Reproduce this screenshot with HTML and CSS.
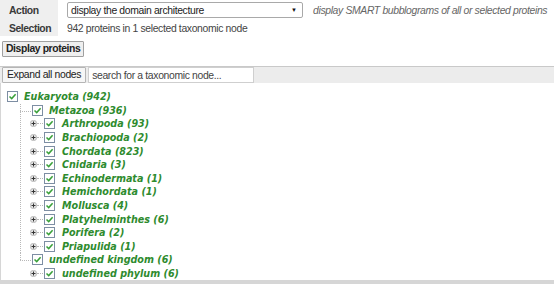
FILE: index.html
```html
<!DOCTYPE html>
<html>
<head>
<meta charset="utf-8">
<link rel="stylesheet" href="styles.css">
</head>
<body>
<div class="form">
  <div class="label">Action</div>
  <div class="value">
    <div class="select"><span>display the domain architecture</span><span class="arrow">&#9660;</span></div>
    <span class="hint">display SMART bubblograms of all or selected proteins</span>
  </div>
  <div class="label">Selection</div>
  <div class="value">942 proteins in 1 selected taxonomic node</div>
</div>
<div class="actions"><button class="btn">Display proteins</button></div>
<div class="toolbar">
  <button class="btn light">Expand all nodes</button>
  <input class="search" type="text" placeholder="search for a taxonomic node...">
</div>
<div class="treebox">
  <ul class="tree">
    <li>
      <div class="node"><span class="cb"></span><span class="name">Eukaryota (942)</span></div>
      <ul class="branch">
        <li>
          <div class="node"><span class="cb"></span><span class="name">Metazoa (936)</span></div>
          <ul class="leaves">
            <li><div class="node"><span class="exp"></span><span class="dash"></span><span class="cb"></span><span class="name">Arthropoda (93)</span></div></li>
            <li><div class="node"><span class="exp"></span><span class="dash"></span><span class="cb"></span><span class="name">Brachiopoda (2)</span></div></li>
            <li><div class="node"><span class="exp"></span><span class="dash"></span><span class="cb"></span><span class="name">Chordata (823)</span></div></li>
            <li><div class="node"><span class="exp"></span><span class="dash"></span><span class="cb"></span><span class="name">Cnidaria (3)</span></div></li>
            <li><div class="node"><span class="exp"></span><span class="dash"></span><span class="cb"></span><span class="name">Echinodermata (1)</span></div></li>
            <li><div class="node"><span class="exp"></span><span class="dash"></span><span class="cb"></span><span class="name">Hemichordata (1)</span></div></li>
            <li><div class="node"><span class="exp"></span><span class="dash"></span><span class="cb"></span><span class="name">Mollusca (4)</span></div></li>
            <li><div class="node"><span class="exp"></span><span class="dash"></span><span class="cb"></span><span class="name">Platyhelminthes (6)</span></div></li>
            <li><div class="node"><span class="exp"></span><span class="dash"></span><span class="cb"></span><span class="name">Porifera (2)</span></div></li>
            <li><div class="node"><span class="exp"></span><span class="dash"></span><span class="cb"></span><span class="name">Priapulida (1)</span></div></li>
          </ul>
        </li>
        <li>
          <div class="node"><span class="cb"></span><span class="name">undefined kingdom (6)</span></div>
          <ul class="leaves">
            <li><div class="node"><span class="exp"></span><span class="dash"></span><span class="cb"></span><span class="name">undefined phylum (6)</span></div></li>
          </ul>
        </li>
      </ul>
    </li>
  </ul>
</div>
<div class="bottombar"></div>
</body>
</html>
```

FILE: styles.css
```css
html, body { margin: 0; padding: 0; background: #fff; }
body {
  width: 554px;
  height: 284px;
  overflow: hidden;
  font-family: "Liberation Sans", Arial, sans-serif;
  font-size: 10.4px;
  letter-spacing: -0.35px;
  color: #333;
  display: flex;
  flex-direction: column;
}
.form {
  display: grid;
  grid-template-columns: 58px 1fr;
  grid-template-rows: 20px 16px;
}
.label {
  background: #efefef;
  font-weight: bold;
  font-size: 10.4px;
  letter-spacing: -0.45px;
  color: #3a3a3a;
  padding-left: 9px;
  display: flex;
  align-items: center;
}
.value {
  display: flex;
  align-items: center;
  padding-left: 9px;
  color: #444;
  white-space: nowrap;
}
.select {
  width: 236px;
  height: 16px;
  box-sizing: border-box;
  border: 1px solid #a9a9a9;
  border-radius: 2px;
  background: #fff;
  display: flex;
  align-items: center;
  justify-content: space-between;
  padding: 0 5px 0 3px;
  color: #222;
  flex: none;
}
.arrow { font-size: 6px; color: #111; letter-spacing: 0; }
.hint {
  margin-left: 10px;
  font-style: italic;
  color: #666;
}
.actions { padding: 5px 0 9px 2px; }
.btn {
  font-family: "Liberation Sans", Arial, sans-serif;
  font-size: 10.4px;
  letter-spacing: -0.4px;
  font-weight: bold;
  color: #222;
  background: #efefef;
  border: 1px solid #a0a0a0;
  border-radius: 1px;
  height: 16px;
  padding: 0 3px;
  margin: 0;
  line-height: 14px;
}
.toolbar {
  border-top: 1px solid #c9c9c9;
  background: #ececec;
  height: 18px;
  display: flex;
  align-items: center;
  padding-left: 2px;
  gap: 2px;
}
.btn.light {
  font-weight: normal;
  letter-spacing: -0.35px;
  background: #f6f6f6;
  border-color: #b5b5b5;
  padding: 0 4px;
}
.search {
  width: 166px;
  height: 16px;
  box-sizing: border-box;
  border: 1px solid #cfcfcf;
  font-family: "Liberation Sans", Arial, sans-serif;
  font-size: 10.4px;
  letter-spacing: -0.35px;
  padding: 0 3px;
  margin: 0;
}
.search::placeholder { color: #444; }
.treebox {
  flex: 1;
  border-left: 1px solid #d6d6d6;
}
ul { list-style: none; margin: 0; padding: 0; }
.tree { padding: 7px 0 0 6px; }
.node {
  display: flex;
  align-items: center;
  height: 13.6px;
}
.cb {
  width: 11px;
  height: 11px;
  box-sizing: border-box;
  border: 1px solid #7d8ea3;
  background: #fff url("data:image/svg+xml;utf8,<svg xmlns='http://www.w3.org/2000/svg' width='9' height='9'><path d='M1.5 4.5 L3.7 6.6 L7.6 2.2' fill='none' stroke='%2339a039' stroke-width='1.5'/></svg>") center / 9px 9px no-repeat;
  flex: none;
}
.name {
  margin-left: 6px;
  font-family: "DejaVu Sans", Verdana, sans-serif;
  font-size: 9.6px;
  letter-spacing: 0;
  font-weight: bold;
  font-style: italic;
  color: #2e8b2e;
  white-space: nowrap;
}
.leaves .name { margin-left: 7px; }
.branch { margin-left: 13px; }
.branch > li { position: relative; padding-left: 12px; }
.branch > li::before {
  content: "";
  position: absolute;
  left: 0;
  top: 0;
  bottom: 0;
  border-left: 1px dotted #b8b8b8;
}
.branch > li:last-child::before { bottom: auto; height: 7px; }
.branch > li::after {
  content: "";
  position: absolute;
  left: 0;
  top: 7px;
  width: 11px;
  border-top: 1px dotted #b8b8b8;
}
.leaves { margin-left: -2px; }
.exp {
  width: 7px;
  height: 7px;
  flex: none;
  background: url("data:image/svg+xml;utf8,<svg xmlns='http://www.w3.org/2000/svg' width='7' height='7'><circle cx='3.5' cy='3.5' r='3.2' fill='%23e4e4e4' stroke='%23a0a0a0' stroke-width='0.6'/><path d='M1.5 3.5 H5.5 M3.5 1.5 V5.5' stroke='%23333' stroke-width='1'/></svg>") center / 7px 7px no-repeat;
}
.dash {
  width: 6px;
  margin-right: 1px;
  border-top: 1px dotted #b8b8b8;
  flex: none;
}
.bottombar {
  height: 4px;
  background: #d6d6d6;
  flex: none;
}
```
